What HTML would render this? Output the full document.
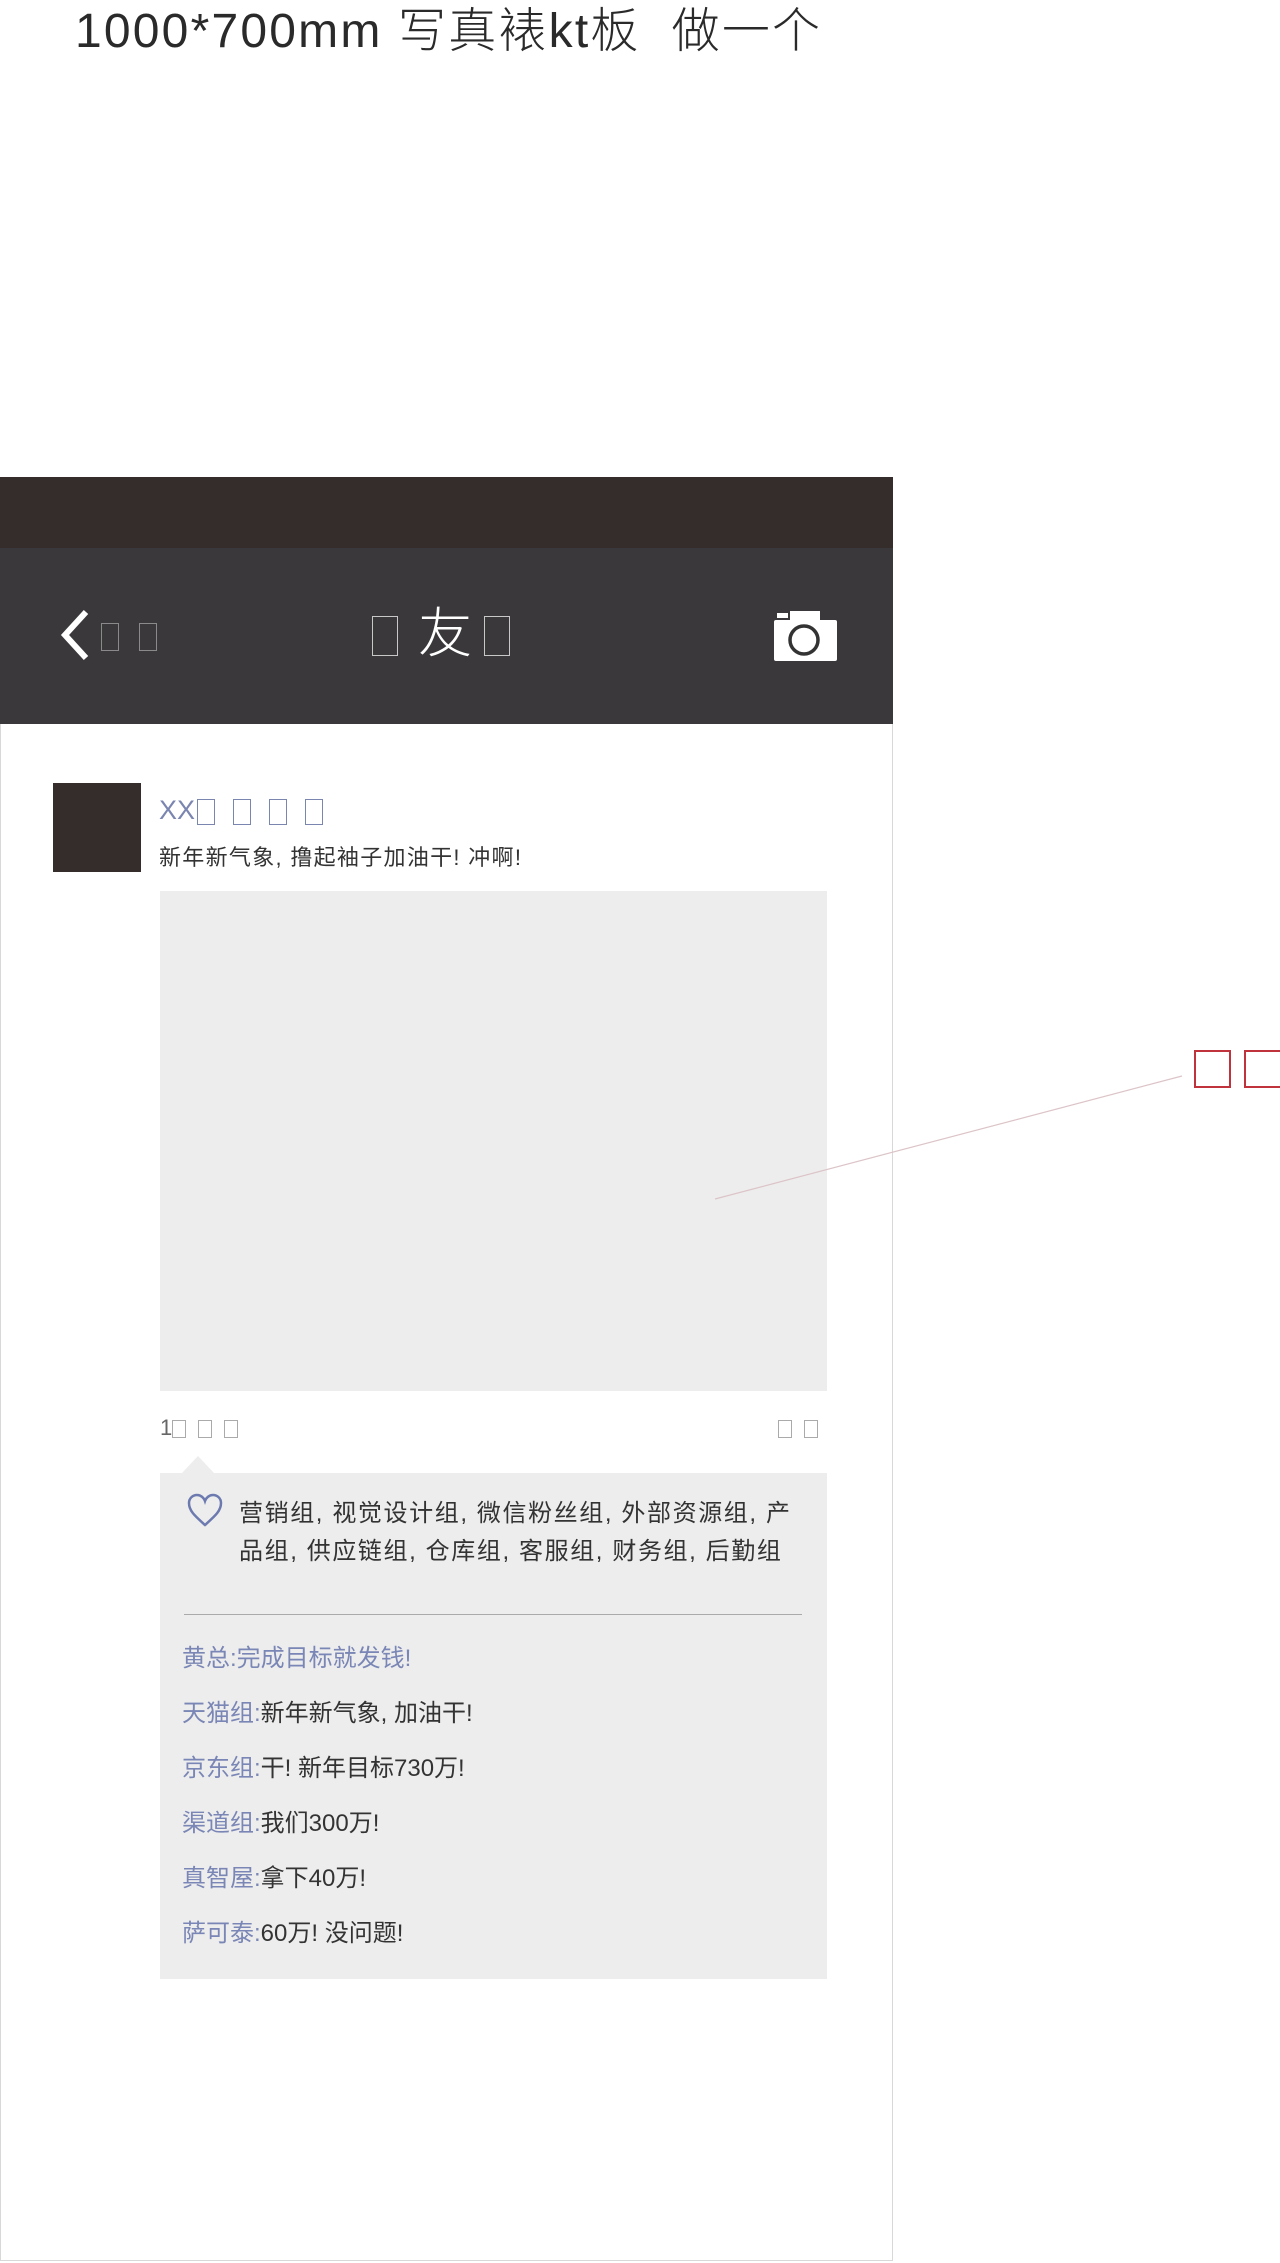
<!DOCTYPE html>
<html><head><meta charset="utf-8">
<style>
*{margin:0;padding:0;box-sizing:border-box}
html,body{width:1280px;height:2263px;background:#fff;overflow:hidden;font-family:"Liberation Sans","Noto Sans CJK SC",sans-serif;}
.abs{position:absolute}
.t{display:inline-block;border:1.5px solid currentColor;vertical-align:middle}
</style></head><body>
<div class="abs" style="left:75px;top:-9px;font-size:48px;color:#2a2a2a;font-weight:300;white-space:nowrap;letter-spacing:2.2px">1000*700mm 写真裱kt板 &nbsp;做一个</div>

<div class="abs" style="left:0;top:477px;width:893px;height:1784px;border:1px solid #d8d8d8;border-top:none"></div>
<div class="abs" style="left:0;top:477px;width:893px;height:72px;background:#352d2c"></div>
<div class="abs" style="left:0;top:548px;width:893px;height:176px;background:#3a383b"></div>

<svg class="abs" style="left:55px;top:608px" width="40" height="54"><polyline points="31,4 10,27 31,50" fill="none" stroke="#fff" stroke-width="6"/></svg>
<span class="abs t" style="left:101px;top:623px;width:18px;height:28px;color:#8a8a8a"></span>
<span class="abs t" style="left:139px;top:623px;width:18px;height:28px;color:#8a8a8a"></span>

<span class="abs t" style="left:372px;top:616px;width:26px;height:40px;color:#c8c8c8"></span>
<div class="abs" style="left:418px;top:602px;font-size:54px;line-height:64px;color:#fff;font-weight:300">友</div>
<span class="abs t" style="left:484px;top:616px;width:26px;height:40px;color:#c8c8c8"></span>

<svg class="abs" style="left:770px;top:606px" width="72" height="60">
<rect x="20" y="5" width="30" height="14" fill="#fff"/>
<rect x="7" y="7" width="11" height="5" fill="#fff"/>
<rect x="4" y="14" width="63" height="41" rx="2" fill="#fff"/>
<circle cx="34" cy="34" r="14" fill="none" stroke="#333" stroke-width="3.5"/>
</svg>

<div class="abs" style="left:53px;top:783px;width:88px;height:89px;background:#352d2c"></div>
<div class="abs" style="left:159px;top:792px;font-size:27px;line-height:36px;color:#7a86b0;white-space:nowrap;font-weight:300">XX<span class="t" style="width:18px;height:26px;margin-left:2px"></span><span class="t" style="width:18px;height:26px;margin-left:18px"></span><span class="t" style="width:18px;height:26px;margin-left:18px"></span><span class="t" style="width:18px;height:26px;margin-left:18px"></span></div>
<div class="abs" style="left:159px;top:843px;font-size:22px;line-height:30px;color:#333;white-space:nowrap;letter-spacing:1.3px">新年新气象, 撸起袖子加油干! 冲啊!</div>

<div class="abs" style="left:160px;top:891px;width:667px;height:500px;background:#ededed"></div>

<div class="abs" style="left:160px;top:1413px;font-size:22px;line-height:30px;color:#666;white-space:nowrap">1<span class="t" style="width:14px;height:18px;color:#aaa"></span><span class="t" style="width:14px;height:18px;color:#aaa;margin-left:12px"></span><span class="t" style="width:14px;height:18px;color:#aaa;margin-left:12px"></span></div>
<div class="abs" style="left:778px;top:1413px;font-size:22px;line-height:30px;white-space:nowrap"><span class="t" style="width:14px;height:18px;color:#aaa"></span><span class="t" style="width:14px;height:18px;color:#aaa;margin-left:12px"></span></div>

<div class="abs" style="left:160px;top:1473px;width:667px;height:506px;background:#ededed"></div>
<div class="abs" style="left:182px;top:1456px;width:0;height:0;border-left:16px solid transparent;border-right:16px solid transparent;border-bottom:17px solid #ededed"></div>

<svg class="abs" style="left:187px;top:1493px" width="38" height="36"><path d="M18,32 C8,23 2,18 2,10 C2,5 6,2 10,2 C14,2 17,5 18,8 C19,5 22,2 26,2 C30,2 34,5 34,10 C34,18 28,23 18,32 Z" fill="none" stroke="#6c7ab0" stroke-width="2.5"/></svg>
<div class="abs" style="left:239px;top:1495px;font-size:24px;line-height:38px;color:#333;white-space:nowrap;letter-spacing:1.6px">营销组, 视觉设计组, 微信粉丝组, 外部资源组, 产<br>品组, 供应链组, 仓库组, 客服组, 财务组, 后勤组</div>

<div class="abs" style="left:184px;top:1614px;width:618px;height:1px;background:#aaa"></div>

<div class="abs" style="left:182px;top:1631px;font-size:24px;line-height:55px;color:#333;white-space:nowrap">
<div style="color:#7a86b5">黄总:完成目标就发钱!</div>
<div><span style="color:#7a86b5">天猫组:</span>新年新气象, 加油干!</div>
<div><span style="color:#7a86b5">京东组:</span>干! 新年目标730万!</div>
<div><span style="color:#7a86b5">渠道组:</span>我们300万!</div>
<div><span style="color:#7a86b5">真智屋:</span>拿下40万!</div>
<div><span style="color:#7a86b5">萨可泰:</span>60万! 没问题!</div>
</div>

<svg class="abs" style="left:0;top:0" width="1280" height="2263" pointer-events="none">
<line x1="715" y1="1199" x2="1182" y2="1076" stroke="#dcc4c8" stroke-width="1.2"/>
<rect x="1195" y="1051" width="35" height="36" fill="none" stroke="#c0333c" stroke-width="2"/>
<rect x="1245" y="1051" width="36" height="36" fill="none" stroke="#c0333c" stroke-width="2"/>
</svg>
</body></html>
